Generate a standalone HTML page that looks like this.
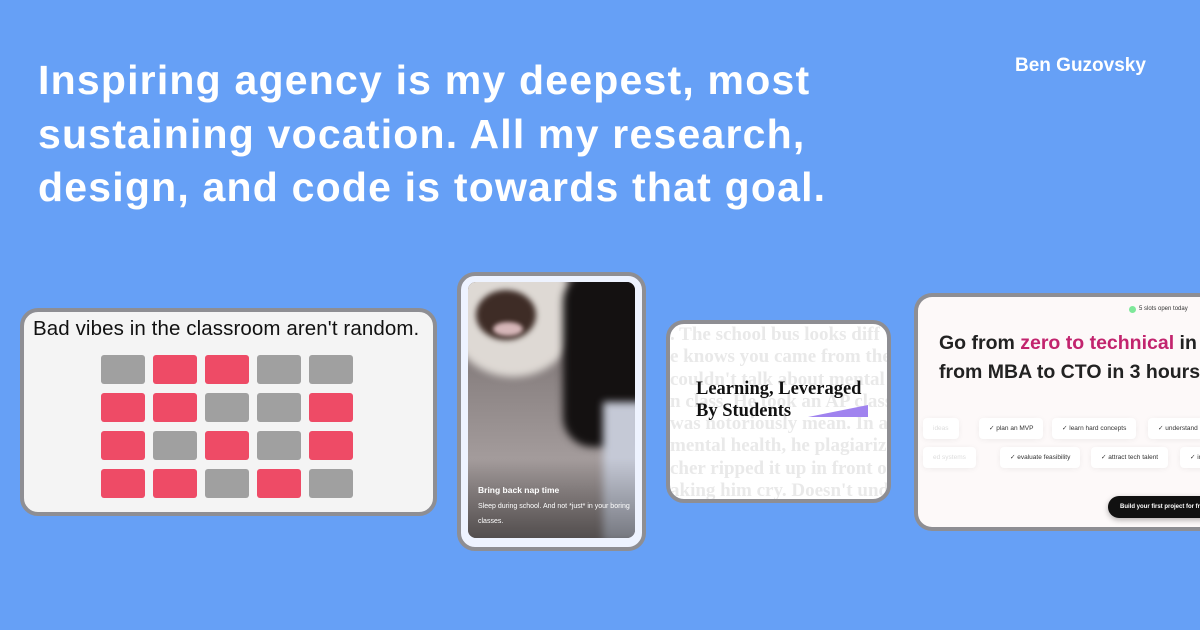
<!DOCTYPE html>
<html><head><style>
*{margin:0;padding:0;box-sizing:border-box}
body{width:1200px;height:630px;background:#66a0f6;position:relative;overflow:hidden;font-family:"Liberation Sans",sans-serif}
.h{position:absolute;left:38px;top:54px;color:#fff;font-size:41px;line-height:53.5px;font-weight:bold;letter-spacing:1.2px}
.name{position:absolute;left:1015px;top:55px;color:#fff;font-size:19px;font-weight:bold}
.card{position:absolute;border:4px solid #8e8e93;border-radius:18px;overflow:hidden}
.c1{left:20px;top:308px;width:417px;height:208px;background:#f4f4f4}
.c1 .t{position:absolute;left:9px;top:5px;font-size:20.5px;letter-spacing:0.1px;color:#111}
.cell{position:absolute;width:44px;height:29px;border-radius:3px}
.g{background:#a0a0a0}.r{background:#ee4b66}
.c2{left:457px;top:272px;width:189px;height:279px;background:#eef3ff}
.img{position:absolute;left:7px;top:6px;width:167px;height:256px;border-radius:8px;overflow:hidden;background:#8a8080}
.c3{left:666px;top:320px;width:225px;height:183px;background:#fff}
.bg{position:absolute;left:0;top:0px;font-family:"Liberation Serif",serif;font-weight:bold;font-size:19px;line-height:22.3px;color:#e9e9e9;white-space:nowrap}
.c4{left:914px;top:293px;width:300px;height:238px;background:#fdf9f9;border-right:none;border-radius:18px 0 0 18px}
.pill{position:absolute;background:#fff;border-radius:4px;box-shadow:0 1px 6px rgba(0,0,0,.06);font-size:6.5px;color:#333;height:21px;line-height:21px;padding:0 10px;white-space:nowrap}
</style></head><body>
<div class="h">Inspiring agency is my deepest, most<br>sustaining vocation. All my research,<br>design, and code is towards that goal.</div>
<div class="name">Ben Guzovsky</div>

<div class="card c1"><div class="t">Bad vibes in the classroom aren't random.</div>
<div class="cell g" style="left:77px;top:43px"></div><div class="cell r" style="left:129px;top:43px"></div><div class="cell r" style="left:181px;top:43px"></div><div class="cell g" style="left:233px;top:43px"></div><div class="cell g" style="left:285px;top:43px"></div>
<div class="cell r" style="left:77px;top:81px"></div><div class="cell r" style="left:129px;top:81px"></div><div class="cell g" style="left:181px;top:81px"></div><div class="cell g" style="left:233px;top:81px"></div><div class="cell r" style="left:285px;top:81px"></div>
<div class="cell r" style="left:77px;top:119px"></div><div class="cell g" style="left:129px;top:119px"></div><div class="cell r" style="left:181px;top:119px"></div><div class="cell g" style="left:233px;top:119px"></div><div class="cell r" style="left:285px;top:119px"></div>
<div class="cell r" style="left:77px;top:157px"></div><div class="cell r" style="left:129px;top:157px"></div><div class="cell g" style="left:181px;top:157px"></div><div class="cell r" style="left:233px;top:157px"></div><div class="cell g" style="left:285px;top:157px"></div>
</div>

<div class="card c2"><div class="img">
<div style="position:absolute;left:0;top:0;width:167px;height:256px;background:linear-gradient(180deg,#6a6060 0%,#8d8585 40%,#a49c9c 70%,#8a8282 100%)"></div>
<div style="position:absolute;left:-20px;top:-30px;width:130px;height:125px;border-radius:50%;background:#ded9d4;filter:blur(4px)"></div>
<div style="position:absolute;left:8px;top:8px;width:60px;height:50px;border-radius:50%;background:#3e2c26;filter:blur(3px)"></div>
<div style="position:absolute;left:25px;top:40px;width:30px;height:14px;border-radius:50%;background:#d6b6b8;filter:blur(2px)"></div>
<div style="position:absolute;left:95px;top:-10px;width:85px;height:175px;border-radius:30px;background:#141111;filter:blur(4px)"></div>
<div style="position:absolute;left:135px;top:120px;width:40px;height:140px;background:#c5c9d6;filter:blur(4px)"></div>
<div style="position:absolute;left:0;bottom:0;width:100%;height:80px;background:linear-gradient(180deg,rgba(0,0,0,0),rgba(0,0,0,.4))"></div>
<div style="position:absolute;left:10px;top:203px;color:#fff;font-size:8.5px;font-weight:bold">Bring back nap time</div>
<div style="position:absolute;left:10px;top:217px;color:#fff;font-size:7px;line-height:15px;width:155px">Sleep during school. And not *just* in your boring classes.</div>
</div></div>

<div class="card c3"><div class="bg">. The school bus looks diff<br>e knows you came from the<br>couldn't talk about mental h<br>n class. He took an AP class<br>was notoriously mean. In a<br>mental health, he plagiarize<br>cher ripped it up in front of<br>aking him cry. Doesn't und</div>
<div style="position:absolute;left:26px;top:54px;font-family:'Liberation Serif',serif;font-weight:bold;font-size:18.5px;line-height:22px;color:#111;white-space:nowrap">Learning, Leveraged<br>By Students</div>
<svg style="position:absolute;left:138px;top:80px" width="62" height="14"><polygon points="0,13 60,1 60,13" fill="#a083ef"/></svg>
</div>

<div class="card c4">
<div style="position:absolute;left:211px;top:9px;width:7px;height:7px;border-radius:50%;background:#7ee89a"></div>
<div style="position:absolute;left:221px;top:9px;font-size:6px;color:#333">5 slots open today</div>
<div style="position:absolute;left:21px;top:32px;font-size:19.5px;line-height:29px;font-weight:bold;color:#222;white-space:nowrap">Go from <span style="color:#c2246e">zero to technical</span> in<br>from MBA to CTO in 3 hours</div>
<div class="pill" style="left:5px;top:121px;color:#ddd">ideas</div>
<div class="pill" style="left:61px;top:121px">✓ plan an MVP</div>
<div class="pill" style="left:134px;top:121px">✓ learn hard concepts</div>
<div class="pill" style="left:230px;top:121px">✓ understand</div>
<div class="pill" style="left:5px;top:150px;color:#ddd">ed systems</div>
<div class="pill" style="left:82px;top:150px">✓ evaluate feasibility</div>
<div class="pill" style="left:173px;top:150px">✓ attract tech talent</div>
<div class="pill" style="left:262px;top:150px">✓ in</div>
<div style="position:absolute;left:190px;top:199px;width:110px;height:22px;border-radius:11px;background:#111;color:#fff;font-size:6px;font-weight:bold;line-height:22px;padding-left:12px;white-space:nowrap;box-shadow:0 2px 6px rgba(0,0,0,.3)">Build your first project for free</div>
</div>
</body></html>
